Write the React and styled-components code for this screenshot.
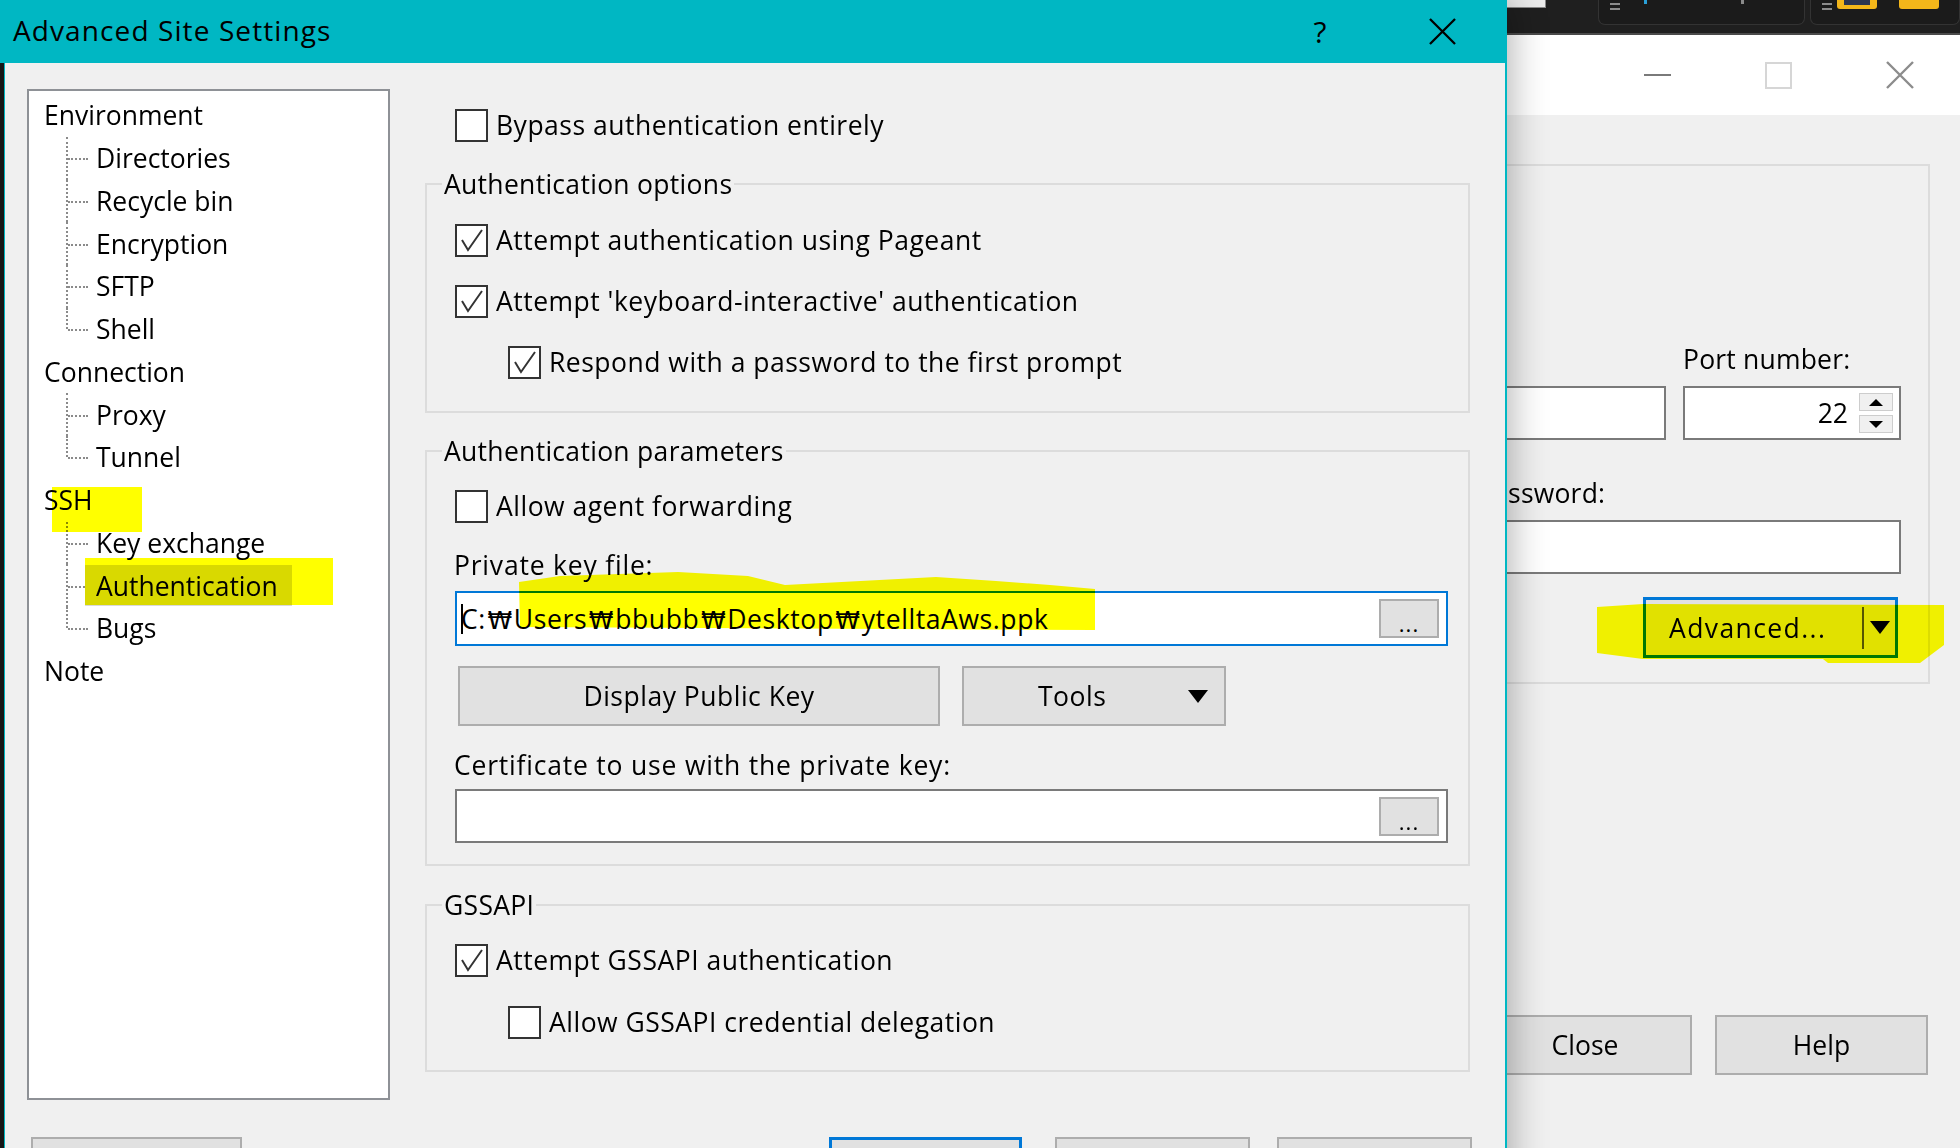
import React from 'react'
import styled, { createGlobalStyle } from 'styled-components'

const GlobalStyle = createGlobalStyle`
  html, body {
    margin: 0;
    padding: 0;
  }
  body {
    width: 1960px;
    height: 1148px;
    overflow: hidden;
    background: #202020;
    font-family: "Open Sans", "Noto Sans CJK KR", sans-serif;
    color: #000;
  }
  * {
    box-sizing: border-box;
  }
`

const treeItems = [
    { name: 'Environment', children: ['Directories', 'Recycle bin', 'Encryption', 'SFTP', 'Shell'] },
    { name: 'Connection', children: ['Proxy', 'Tunnel'] },
    { name: 'SSH', children: ['Key exchange', 'Authentication', 'Bugs'] },
    { name: 'Note', children: [] },
]

const keyPath = ['C:', 'Users', 'bbubb', 'Desktop', 'ytelltaAws.ppk']

const CheckIcon = () => (
    <svg width="29" height="29" viewBox="0 0 29 29">
        <polyline points="5,14 11,24 25,4" fill="none" stroke="#333" strokeWidth="2" />
    </svg>
)

const CloseGlyph = ({ color, size }) => (
    <svg width={size} height={size} viewBox="0 0 28 28">
        <path d="M1 1 L27 27 M27 1 L1 27" stroke={color} strokeWidth="2.4" fill="none" />
    </svg>
)

const Check = ({ checked, indent, children }) => (
    <CheckRow $indent={indent}>
        <Box>{checked && <CheckIcon />}</Box>
        <span>{children}</span>
    </CheckRow>
)

const App = () => {
    return (
        <>
            <GlobalStyle />
            <Desktop>
                <TopStrip>
                    <StripTile />
                    <StripPanel $width={207}>
                        <Grip />
                        <Tick $color="#2aa0d8" $gap={24} />
                        <Tick $color="#8a8a8a" $gap={94} />
                    </StripPanel>
                    <StripPanel>
                        <Grip />
                        <YellowIcon $gap={5}><span /></YellowIcon>
                        <YellowIcon $gap={22} />
                    </StripPanel>
                </TopStrip>

                <LoginWindow>
                    <LoginTitle>
                        <Caption><MinIcon /></Caption>
                        <Caption><MaxIcon /></Caption>
                        <Caption><CloseGlyph color="#8c8c8c" size={28} /></Caption>
                    </LoginTitle>
                    <LoginBody>
                        <SessionGroup>
                            <FieldGrid $side={218}>
                                <Field>
                                    <FieldLabel>Host name:</FieldLabel>
                                    <TextBox />
                                </Field>
                                <Field>
                                    <FieldLabel>Port number:</FieldLabel>
                                    <TextBox $align="flex-end">
                                        <PortValue>22</PortValue>
                                        <Spinner>
                                            <SpinHalf><ArrowUp /></SpinHalf>
                                            <SpinHalf><ArrowDown /></SpinHalf>
                                        </Spinner>
                                    </TextBox>
                                </Field>
                            </FieldGrid>
                            <FieldGrid $side={424} $top={35}>
                                <Field>
                                    <FieldLabel>User name:</FieldLabel>
                                    <TextBox />
                                </Field>
                                <Field>
                                    <FieldLabel>Password:</FieldLabel>
                                    <TextBox />
                                </Field>
                            </FieldGrid>
                            <AdvancedRow>
                                <Marked>
                                    <SplitButton>
                                        <SplitText>Advanced...</SplitText>
                                        <SplitDivider />
                                        <SplitArrow><ArrowDown $big /></SplitArrow>
                                    </SplitButton>
                                    <MarkerSvg width="347" height="70" viewBox="0 0 347 70" style={{ left: -46, top: 0 }}>
                                        <polygon points="0,10 46,7 347,8 347,48 331,60 323,66 231,66 226,62 46,62 0,56" fill="#ffff00" />
                                    </MarkerSvg>
                                </Marked>
                            </AdvancedRow>
                        </SessionGroup>
                        <LoginButtons>
                            <PushButton $width={214}>Close</PushButton>
                            <PushButton $width={213}>Help</PushButton>
                        </LoginButtons>
                    </LoginBody>
                </LoginWindow>

                <Dialog>
                    <TitleBar>
                        <Title>Advanced Site Settings</Title>
                        <TitleButton $width={120}>?</TitleButton>
                        <TitleButton $width={125}><CloseGlyph color="#000" size={27} /></TitleButton>
                    </TitleBar>
                    <DialogBody>
                        <MainRow>
                            <TreeBox>
                                {treeItems.map((item) => (
                                    <div key={item.name}>
                                        <RootRow>
                                            {item.name}
                                            {item.name === 'SSH' && <Marker $x={23} $y={8} $w={90} $h={45} />}
                                        </RootRow>
                                        {item.children.map((child, i) => (
                                            <ChildRow key={child} $last={i === item.children.length - 1}>
                                                <ChildLabel $selected={child === 'Authentication'}>{child}</ChildLabel>
                                                {child === 'Authentication' && <Marker $x={56} $y={-6} $w={248} $h={47} />}
                                            </ChildRow>
                                        ))}
                                    </div>
                                ))}
                            </TreeBox>

                            <Panel>
                                <Check indent={30}>Bypass authentication entirely</Check>

                                <GroupBox $top={24}>
                                    <Legend>Authentication options</Legend>
                                    <Stack $top={21} $gap={27} $bottom={32}>
                                        <Check checked>Attempt authentication using Pageant</Check>
                                        <Check checked>Attempt 'keyboard-interactive' authentication</Check>
                                        <Check checked indent={53}>Respond with a password to the first prompt</Check>
                                    </Stack>
                                </GroupBox>

                                <GroupBox $top={20}>
                                    <Legend>Authentication parameters</Legend>
                                    <Stack $top={20} $gap={0} $bottom={21}>
                                        <Check>Allow agent forwarding</Check>
                                        <FieldLabel $top={24} $shift={-1} $spread>Private key file:</FieldLabel>
                                        <Marked $top={8}>
                                            <FileBox $focused>
                                                <Caret />
                                                <KeyPath>
                                                    {keyPath.map((part, i) => (
                                                        <React.Fragment key={part}>
                                                            {i > 0 && <Won>₩</Won>}
                                                            {part}
                                                        </React.Fragment>
                                                    ))}
                                                </KeyPath>
                                                <BrowseButton>...</BrowseButton>
                                            </FileBox>
                                            <MarkerSvg width="580" height="62" viewBox="0 0 580 62" style={{ left: 62, top: -20 }}>
                                                <polygon points="2,11 43,5 161,1 231,5 268,14 419,6 479,10 533,14 578,18 578,59 3,56" fill="#ffff00" />
                                            </MarkerSvg>
                                        </Marked>
                                        <KeyButtons>
                                            <PushButton $width={482} $height={60}>Display Public Key</PushButton>
                                            <ToolsButton>
                                                <span>Tools</span>
                                                <ArrowDown $big />
                                            </ToolsButton>
                                        </KeyButtons>
                                        <FieldLabel $top={21} $shift={-1} $spread>Certificate to use with the private key:</FieldLabel>
                                        <FileBox $top={6} $height={54}>
                                            <BrowseButton>...</BrowseButton>
                                        </FileBox>
                                    </Stack>
                                </GroupBox>

                                <GroupBox $top={21}>
                                    <Legend>GSSAPI</Legend>
                                    <Stack $top={20} $gap={28} $bottom={31}>
                                        <Check checked>Attempt GSSAPI authentication</Check>
                                        <Check indent={53}>Allow GSSAPI credential delegation</Check>
                                    </Stack>
                                </GroupBox>
                            </Panel>
                        </MainRow>

                        <DialogButtons>
                            <PushButton $width={211}>Login</PushButton>
                            <DefaultButton>OK</DefaultButton>
                            <PushButton $width={195}>Cancel</PushButton>
                            <PushButton $width={195}>Help</PushButton>
                        </DialogButtons>
                    </DialogBody>
                </Dialog>
            </Desktop>
        </>
    )
}

/* ---------- desktop / background window ---------- */

const Desktop = styled.div`
    position: relative;
    width: 1960px;
    height: 1148px;
    overflow: hidden;
    display: flex;
    flex-direction: column;
    background: #202020;
`

const TopStrip = styled.div`
    height: 35px;
    flex-shrink: 0;
    display: flex;
    align-items: flex-start;
    padding-left: 1500px;
    background: #1f1f1f;
    border-bottom: 2px solid #4a4a4a;
`

const StripTile = styled.div`
    width: 46px;
    height: 8px;
    background: #ececec;
    border: 1px solid #8a8a8a;
    border-top: none;
`

const StripPanel = styled.div`
    width: ${(p) => (p.$width ? `${p.$width}px` : 'auto')};
    flex: ${(p) => (p.$width ? 'none' : '1')};
    margin-left: ${(p) => (p.$width ? '52px' : '5px')};
    height: 25px;
    display: flex;
    align-items: flex-start;
    padding-left: 11px;
    border: 1px solid #333;
    border-top: none;
    border-radius: 0 0 7px 7px;
    background: #1b1b1b;
`

const Grip = styled.div`
    margin-top: 3px;
    width: 10px;
    height: 7px;
    border-top: 2px solid #8c8c8c;
    border-bottom: 2px solid #8c8c8c;
`

const Tick = styled.div`
    margin-left: ${(p) => p.$gap}px;
    width: 3px;
    height: 4px;
    background: ${(p) => p.$color};
`

const YellowIcon = styled.div`
    margin-left: ${(p) => p.$gap}px;
    width: 40px;
    height: 9px;
    background: #f3b61a;
    border-radius: 0 0 3px 3px;
    display: flex;
    justify-content: center;
    span {
        width: 26px;
        height: 5px;
        background: #2b3550;
    }
`

const LoginWindow = styled.div`
    flex: 1;
    margin-left: 1100px;
    display: flex;
    flex-direction: column;
    background: #f0f0f0;
`

const LoginTitle = styled.div`
    height: 80px;
    display: flex;
    justify-content: flex-end;
    background: #fff;
`

const Caption = styled.div`
    width: 121px;
    display: flex;
    align-items: center;
    justify-content: center;
`

const MinIcon = styled.div`
    width: 27px;
    height: 2px;
    background: #7a7a7a;
`

const MaxIcon = styled.div`
    width: 27px;
    height: 27px;
    border: 2px solid #d6d6d6;
`

const LoginBody = styled.div`
    display: flex;
    flex-direction: column;
    padding: 49px 30px 0 10px;
`

const SessionGroup = styled.div`
    border: 2px solid #dcdcdc;
    padding: 175px 27px 24px 15px;
`

const FieldGrid = styled.div`
    display: grid;
    grid-template-columns: 1fr ${(p) => p.$side}px;
    column-gap: 17px;
    margin-top: ${(p) => p.$top || 0}px;
`

const Field = styled.div`
    display: flex;
    flex-direction: column;
    gap: 9px;
`

const FieldLabel = styled.div`
    height: 36px;
    line-height: 36px;
    font-size: 26.5px;
    letter-spacing: ${(p) => (p.$spread ? '0.8px' : '0.2px')};
    white-space: nowrap;
    margin-top: ${(p) => p.$top || 0}px;
    margin-left: ${(p) => p.$shift || 0}px;
`

const TextBox = styled.div`
    height: 54px;
    display: flex;
    align-items: center;
    justify-content: ${(p) => p.$align || 'flex-start'};
    background: #fff;
    border: 2px solid #7a7a7a;
`

const PortValue = styled.span`
    font-size: 26.5px;
    margin-right: 11px;
`

const Spinner = styled.div`
    width: 34px;
    margin-right: 6px;
    display: flex;
    flex-direction: column;
    gap: 4px;
`

const SpinHalf = styled.div`
    height: 18px;
    display: flex;
    align-items: center;
    justify-content: center;
    background: #f0f0f0;
    border: 1px solid #cdcdcd;
`

const ArrowUp = styled.span`
    width: 0;
    height: 0;
    border-left: 7px solid transparent;
    border-right: 7px solid transparent;
    border-bottom: 7px solid #000;
`

const ArrowDown = styled.span`
    width: 0;
    height: 0;
    border-left: ${(p) => (p.$big ? 10 : 7)}px solid transparent;
    border-right: ${(p) => (p.$big ? 10 : 7)}px solid transparent;
    border-top: ${(p) => (p.$big ? 13 : 7)}px solid #000;
`

const AdvancedRow = styled.div`
    display: flex;
    justify-content: flex-end;
    margin-top: 23px;
    padding-right: 3px;
`

const Marked = styled.div`
    position: relative;
    margin-top: ${(p) => p.$top || 0}px;
`

const MarkerSvg = styled.svg`
    position: absolute;
    mix-blend-mode: multiply;
    pointer-events: none;
`

const SplitButton = styled.div`
    width: 255px;
    height: 61px;
    display: flex;
    align-items: center;
    background: #e1e1e1;
    border: 3px solid #0078d7;
`

const SplitText = styled.span`
    flex: 1;
    padding-left: 23px;
    font-size: 26.5px;
    letter-spacing: 1.4px;
`

const SplitDivider = styled.span`
    width: 2px;
    height: 42px;
    background: #555;
`

const SplitArrow = styled.span`
    width: 31px;
    display: flex;
    justify-content: center;
`

const LoginButtons = styled.div`
    display: flex;
    justify-content: flex-end;
    gap: 23px;
    margin-top: 331px;
    padding-right: 2px;
`

const PushButton = styled.div`
    width: ${(p) => p.$width}px;
    height: ${(p) => p.$height || 60}px;
    flex-shrink: 0;
    display: flex;
    align-items: center;
    justify-content: center;
    font-size: 26.5px;
    background: #e1e1e1;
    border: 2px solid #adadad;
`

/* ---------- dialog ---------- */

const Dialog = styled.section`
    position: absolute;
    left: 0;
    top: 0;
    width: 1507px;
    height: 1190px;
    display: flex;
    flex-direction: column;
    background: #f0f0f0;
    border-right: 2px solid #00b7c3;
    box-shadow: 4px 0 34px rgba(0, 0, 0, 0.3);
`

const TitleBar = styled.div`
    height: 63px;
    flex-shrink: 0;
    display: flex;
    align-items: center;
    background: #00b7c3;
`

const Title = styled.div`
    flex: 1;
    padding-left: 13px;
    padding-bottom: 3px;
    font-size: 28px;
    letter-spacing: 1.1px;
    white-space: nowrap;
`

const TitleButton = styled.div`
    width: ${(p) => p.$width}px;
    height: 100%;
    display: flex;
    align-items: center;
    justify-content: center;
    font-size: 30px;
`

const DialogBody = styled.div`
    flex: 1;
    display: flex;
    flex-direction: column;
    padding: 26px 35px 0 23px;
    border-left: 4px solid #161616;
    box-shadow: inset 1px 0 0 #00b7c3;
`

const MainRow = styled.div`
    display: flex;
    gap: 35px;
`

const TreeBox = styled.div`
    width: 363px;
    height: 1011px;
    flex-shrink: 0;
    padding-top: 3px;
    background: #fff;
    border: 2px solid #8e9196;
    font-size: 26.5px;
`

const RootRow = styled.div`
    position: relative;
    height: 42.75px;
    display: flex;
    align-items: center;
    padding-left: 15px;
    white-space: nowrap;
`

const ChildRow = styled.div`
    position: relative;
    height: 42.75px;
    display: flex;
    align-items: center;
    padding-left: 56px;
    white-space: nowrap;
    &::before {
        content: '';
        position: absolute;
        left: 37px;
        top: 0;
        height: ${(p) => (p.$last ? '50%' : '100%')};
        border-left: 2px dotted #8a8a8a;
    }
    &::after {
        content: '';
        position: absolute;
        left: 39px;
        top: 50%;
        width: 20px;
        border-top: 2px dotted #8a8a8a;
    }
`

const ChildLabel = styled.span`
    position: relative;
    z-index: 1;
    height: 41px;
    display: flex;
    align-items: center;
    padding: 0 14px 0 11px;
    background: ${(p) => (p.$selected ? '#d9d9d9' : 'transparent')};
`

const Marker = styled.span`
    position: absolute;
    z-index: 2;
    left: ${(p) => p.$x}px;
    top: ${(p) => p.$y}px;
    width: ${(p) => p.$w}px;
    height: ${(p) => p.$h}px;
    background: #ffff00;
    mix-blend-mode: multiply;
    pointer-events: none;
`

const Panel = styled.div`
    width: 1045px;
    display: flex;
    flex-direction: column;
    padding-top: 19px;
    font-size: 26.5px;
    letter-spacing: 0.5px;
`

const CheckRow = styled.div`
    height: 34px;
    display: flex;
    align-items: center;
    gap: 8px;
    margin-left: ${(p) => p.$indent || 0}px;
    white-space: nowrap;
`

const Box = styled.span`
    width: 33px;
    height: 33px;
    flex-shrink: 0;
    display: flex;
    align-items: center;
    justify-content: center;
    background: #fff;
    border: 2px solid #333;
`

const GroupBox = styled.fieldset`
    margin: ${(p) => p.$top}px 0 0 0;
    min-width: 0;
    padding: 0 20px 0 28px;
    border: 2px solid #dcdcdc;
`

const Legend = styled.legend`
    margin-left: -13px;
    padding: 0 2px;
    line-height: 36px;
    font-size: 26.5px;
    letter-spacing: 0.3px;
`

const Stack = styled.div`
    display: flex;
    flex-direction: column;
    gap: ${(p) => p.$gap}px;
    padding-top: ${(p) => p.$top}px;
    padding-bottom: ${(p) => p.$bottom}px;
`

const FileBox = styled.div`
    height: ${(p) => p.$height || 55}px;
    margin-top: ${(p) => p.$top || 0}px;
    display: flex;
    align-items: center;
    padding: 0 7px 0 4px;
    background: #fff;
    border: 2px solid ${(p) => (p.$focused ? '#0078d7' : '#7a7a7a')};
`

const Caret = styled.span`
    width: 2px;
    height: 30px;
    margin-right: -2px;
    background: #000;
`

const KeyPath = styled.span`
    font-size: 26.5px;
    letter-spacing: 0.6px;
    white-space: nowrap;
`

const Won = styled.span`
    display: inline-block;
    width: 28px;
    text-align: center;
    font-family: "DejaVu Sans", sans-serif;
    font-size: 25px;
    letter-spacing: 0;
`

const BrowseButton = styled.div`
    width: 60px;
    height: 39px;
    margin-left: auto;
    display: flex;
    align-items: flex-end;
    justify-content: center;
    padding-bottom: 2px;
    font-size: 22px;
    line-height: 1;
    letter-spacing: 1px;
    background: #e1e1e1;
    border: 2px solid #adadad;
`

const KeyButtons = styled.div`
    display: flex;
    gap: 22px;
    margin-top: 20px;
    padding-left: 3px;
`

const ToolsButton = styled.div`
    width: 264px;
    height: 60px;
    display: flex;
    align-items: center;
    padding: 0 16px 0 74px;
    justify-content: space-between;
    background: #e1e1e1;
    border: 2px solid #adadad;
`

const DialogButtons = styled.div`
    display: flex;
    gap: 27px;
    margin: 37px -2px 0 4px;
    & > :nth-child(2) {
        margin-left: auto;
        margin-right: 6px;
    }
`

const DefaultButton = styled(PushButton).attrs({ $width: 193 })`
    border: 3px solid #0078d7;
`

export default App
